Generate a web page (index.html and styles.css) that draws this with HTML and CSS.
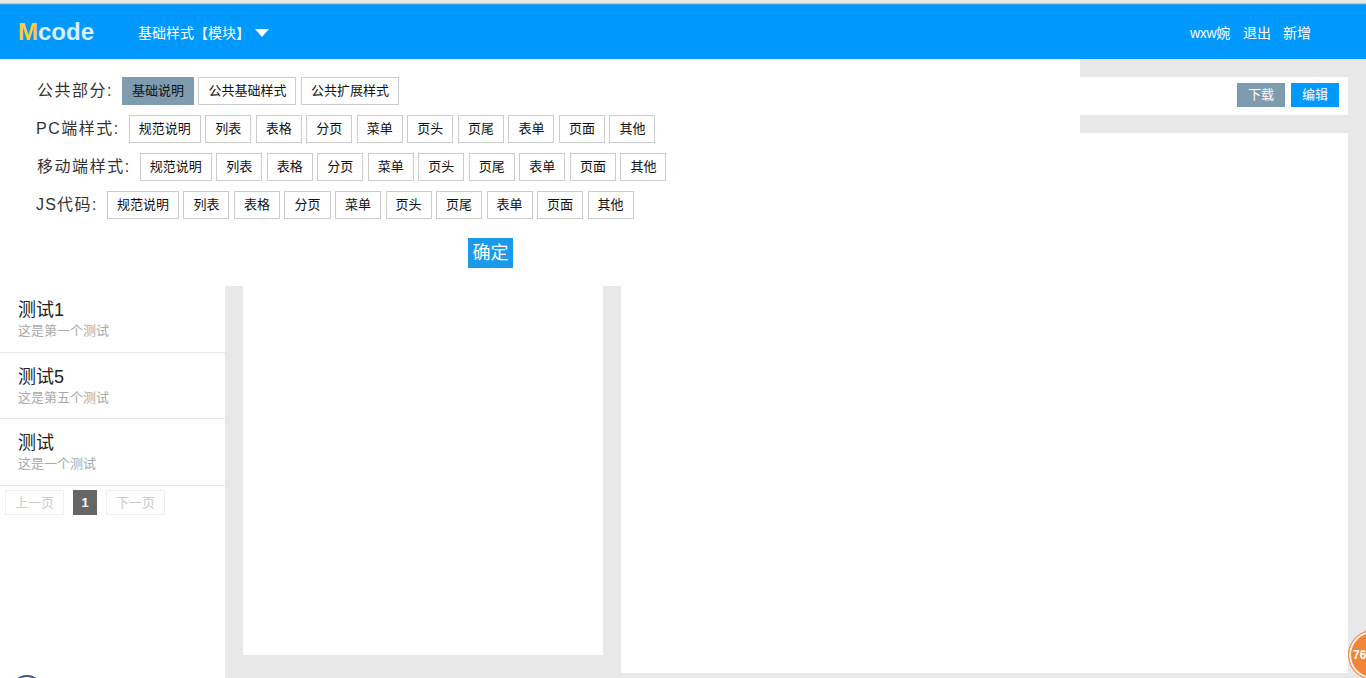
FILE: index.html
```html
<!DOCTYPE html>
<html lang="zh-CN">
<head>
    <meta charset="UTF-8">
    <title>Mcode</title>
    <link rel="stylesheet" href="styles.css">
</head>
<body>
    <header class="topbar">
        <div class="logo"><span class="logo-m">M</span>code</div>
        <div class="module">基础样式【模块】<span class="caret"></span></div>
        <nav class="user-nav">
            <a class="user-name">wxw婉</a>
            <a>退出</a>
            <a>新增</a>
        </nav>
    </header>

    <main class="main">
        <aside class="list-col">
            <div class="list-item">
                <h3>测试1</h3>
                <p>这是第一个测试</p>
            </div>
            <div class="list-item">
                <h3>测试5</h3>
                <p>这是第五个测试</p>
            </div>
            <div class="list-item">
                <h3>测试</h3>
                <p>这是一个测试</p>
            </div>
            <div class="pager">
                <a class="page-btn">上一页</a>
                <a class="page-num">1</a>
                <a class="page-btn">下一页</a>
            </div>
        </aside>

        <section class="middle-col">
            <div class="middle-card"></div>
        </section>

        <section class="right-col">
            <div class="toolbar">
                <a class="tool-btn tool-grey">下载</a>
                <a class="tool-btn tool-blue">编辑</a>
            </div>
            <div class="content"></div>
        </section>

        <div class="filter-panel">
            <div class="filter-row">
                <span class="filter-label">公共部分:</span>
                <a class="tag active">基础说明</a>
                <a class="tag">公共基础样式</a>
                <a class="tag">公共扩展样式</a>
            </div>
            <div class="filter-row">
                <span class="filter-label label-latin"><span class="latin-wide">PC</span>端样式:</span>
                <a class="tag">规范说明</a><a class="tag">列表</a><a class="tag">表格</a><a class="tag">分页</a><a class="tag">菜单</a><a class="tag">页头</a><a class="tag">页尾</a><a class="tag">表单</a><a class="tag">页面</a><a class="tag">其他</a>
            </div>
            <div class="filter-row">
                <span class="filter-label label-wide">移动端样式:</span>
                <a class="tag">规范说明</a><a class="tag">列表</a><a class="tag">表格</a><a class="tag">分页</a><a class="tag">菜单</a><a class="tag">页头</a><a class="tag">页尾</a><a class="tag">表单</a><a class="tag">页面</a><a class="tag">其他</a>
            </div>
            <div class="filter-row">
                <span class="filter-label label-latin"><span class="latin">JS</span>代码:</span>
                <a class="tag">规范说明</a><a class="tag">列表</a><a class="tag">表格</a><a class="tag">分页</a><a class="tag">菜单</a><a class="tag">页头</a><a class="tag">页尾</a><a class="tag">表单</a><a class="tag">页面</a><a class="tag">其他</a>
            </div>
            <a class="confirm">确定</a>
        </div>
    </main>

    <div class="float-ball">76</div>
    <div class="float-ring"></div>
</body>
</html>
```

FILE: styles.css
```css
html, body {
    height: 100%;
}

body {
    margin: 0;
    display: flex;
    flex-direction: column;
    overflow: hidden;
    background: #e8e8e8;
    color: #222;
    font-family: "Liberation Sans", "Noto Sans CJK SC", sans-serif;
}

a {
    cursor: pointer;
}

/* top bar */
.topbar {
    flex: none;
    display: flex;
    align-items: center;
    height: 55px;
    box-sizing: border-box;
    margin-top: 4px;
    border-top: 1px solid #3f9fd8;
    box-shadow: 0 -1px 0 #b5cbd8;
    background: #0099ff;
    color: #fff;
}

.logo {
    width: 120px;
    padding-left: 18px;
    font-size: 24px;
    font-weight: bold;
    color: #d9f0ff;
}

.logo-m {
    color: #ffcc33;
}

.module {
    display: flex;
    align-items: center;
    margin-top: -1px;
    font-size: 14px;
}

.caret {
    width: 0;
    height: 0;
    margin: 2px 0 0 5px;
    border-left: 7px solid transparent;
    border-right: 7px solid transparent;
    border-top: 8px solid #fff;
}

.user-nav {
    display: flex;
    gap: 12px;
    margin-left: auto;
    margin-top: -1px;
    padding-right: 55px;
    font-size: 14px;
}

.user-name {
    margin-right: 1px;
    letter-spacing: -0.3px;
}

/* three columns */
.main {
    flex: 1;
    position: relative;
    display: grid;
    grid-template-columns: 225px 396px 1fr;
    min-height: 0;
}

.list-col {
    padding-top: 227px;
    background: #fff;
}

.list-item {
    height: 66.5px;
    box-sizing: border-box;
    padding: 14px 0 0 18px;
    border-bottom: 1px solid #e8e8e8;
}

.list-item h3 {
    margin: 0;
    font-size: 18px;
    font-weight: normal;
    line-height: 21px;
    color: #222;
}

.list-item p {
    margin: 0;
    font-size: 13px;
    line-height: 20px;
    color: #aaa;
}

.pager {
    display: flex;
    gap: 9px;
    padding: 4.5px 0 0 5px;
}

.page-btn {
    width: 59px;
    height: 25px;
    box-sizing: border-box;
    border: 1px solid #eee;
    font-size: 13px;
    line-height: 23px;
    text-align: center;
    color: #ccc;
}

.page-num {
    width: 24px;
    height: 25px;
    background: #666;
    color: #fff;
    font-size: 13px;
    font-weight: bold;
    line-height: 25px;
    text-align: center;
}

.middle-col {
    padding: 0 18px;
}

.middle-card {
    height: 596px;
    background: #fff;
}

.right-col {
    padding: 18px 18px 0 0;
}

.toolbar {
    display: flex;
    justify-content: flex-end;
    gap: 6px;
    height: 38px;
    box-sizing: border-box;
    padding: 6px 9px 0 0;
    background: #fff;
}

.tool-btn {
    width: 48px;
    height: 24px;
    color: #fff;
    font-size: 13px;
    line-height: 24px;
    text-align: center;
}

.tool-grey {
    background: #7f9bb0;
}

.tool-blue {
    background: #0099ff;
}

.content {
    height: 540px;
    margin-top: 18px;
    background: #fff;
}

/* dropdown panel over the columns */
.filter-panel {
    position: absolute;
    left: 0;
    top: 0;
    width: 1080px;
    height: 227px;
    box-sizing: border-box;
    padding-top: 18px;
    background: #fff;
}

.filter-row {
    display: flex;
    gap: 4.5px;
    align-items: center;
    height: 28px;
    margin-bottom: 10px;
    padding-left: 37px;
}

.filter-label {
    margin: -5px 4.5px 0 0;
    font-size: 16px;
    letter-spacing: 1.5px;
    color: #333;
}

.label-wide {
    letter-spacing: 1.55px;
}

.label-latin {
    margin-left: -1px;
}

.latin {
    letter-spacing: 1.15px;
}

.latin-wide {
    letter-spacing: 1.55px;
}

.tag {
    height: 28px;
    box-sizing: border-box;
    padding: 0 9px;
    border: 1px solid #ccc;
    font-size: 13px;
    line-height: 26px;
    color: #111;
}

.tag.active {
    background: #7f9bb0;
    border-color: #7f9bb0;
}

.confirm {
    display: block;
    width: 45px;
    height: 30px;
    margin: 19px 0 0 468px;
    background: #1a9ae8;
    color: #fff;
    font-size: 18px;
    line-height: 30px;
    text-align: center;
}

/* floating widgets cut off by the window */
.float-ball {
    position: absolute;
    left: 1348px;
    top: 630px;
    width: 50px;
    height: 50px;
    box-sizing: border-box;
    border: 1px solid #f0853a;
    box-shadow: inset 0 0 0 2px #fdf0e6;
    border-radius: 50%;
    padding-left: 4px;
    background: #f0853a;
    color: #fff;
    font-size: 12px;
    font-weight: bold;
    line-height: 48px;
}

.float-ring {
    position: absolute;
    left: 11px;
    top: 675px;
    width: 32px;
    height: 32px;
    box-sizing: border-box;
    border: 2px solid #3b5a7a;
    border-radius: 50%;
    background: #fff;
}
```
